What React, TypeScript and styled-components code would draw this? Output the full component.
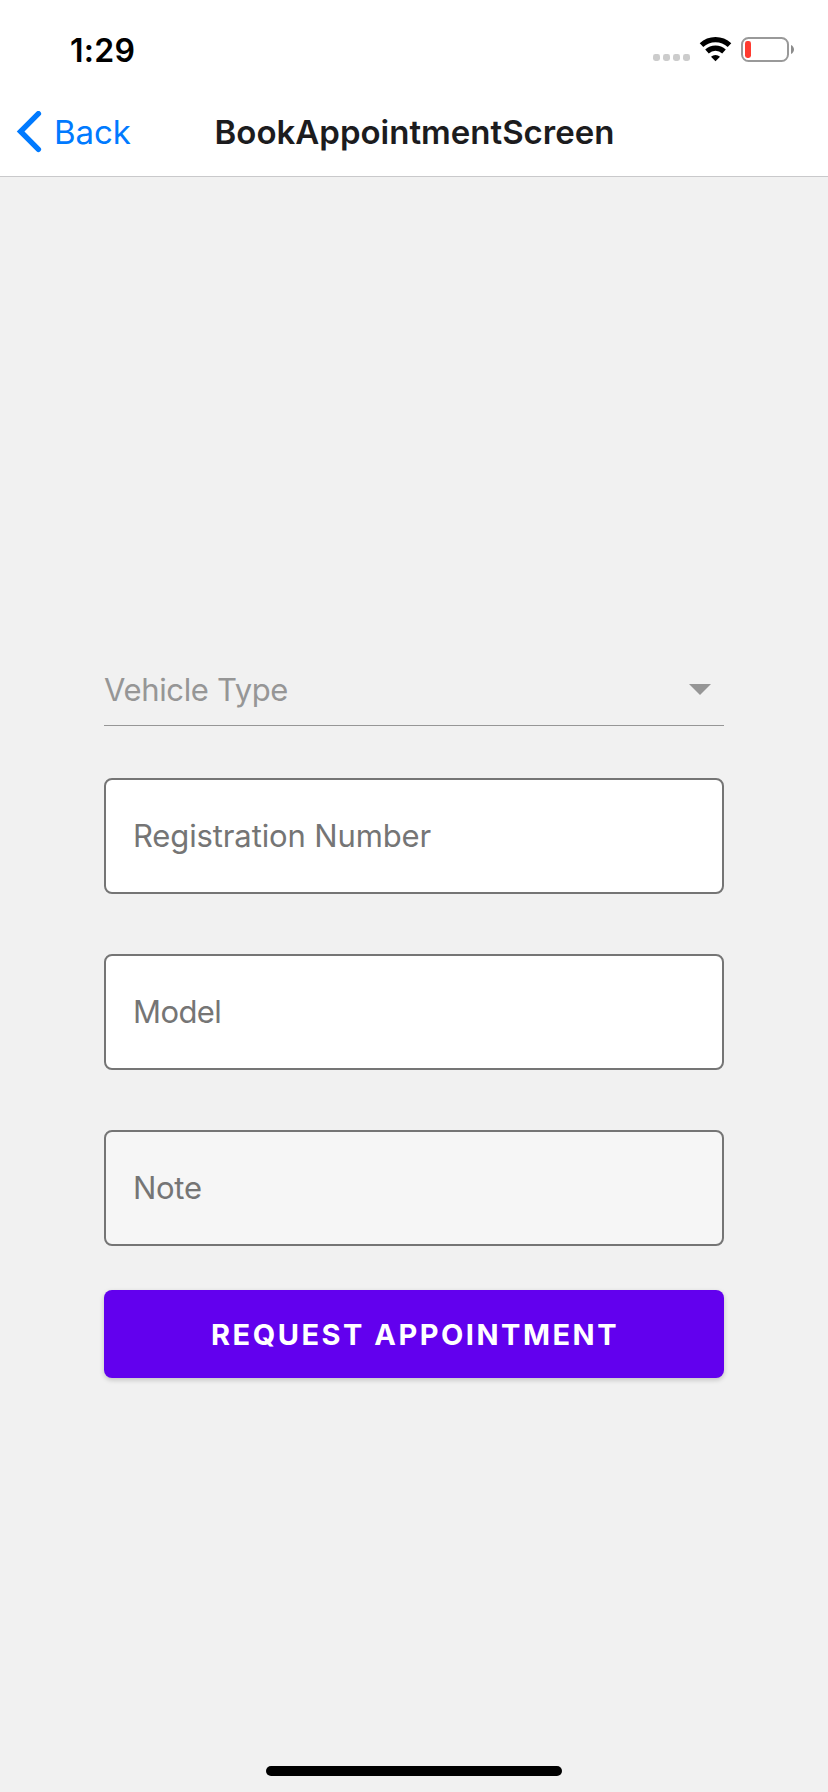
import React from "react";
import styled, { createGlobalStyle } from "styled-components";

const GlobalStyle = createGlobalStyle`
  *, *::before, *::after { box-sizing: border-box; }
  html, body { margin: 0; background: #f1f1f1; }
  body, input, button { font-family: Inter, "Liberation Sans", sans-serif; }
`;

const Screen = styled.div`
  display: flex;
  flex-direction: column;
  width: 828px;
  height: 1792px;
  background: #f1f1f1;
`;

const Header = styled.header`
  background: #ffffff;
  border-bottom: 1px solid #c9c9cb;
`;

const StatusBar = styled.div`
  display: flex;
  align-items: center;
  justify-content: space-between;
  height: 88px;
  padding: 10px 34px 0 70px;
`;

const Clock = styled.span`
  padding-top: 3px;
  font-size: 32px;
  font-weight: 600;
  line-height: 40px;
  letter-spacing: 0.3px;
  color: #000000;
`;

const StatusIcons = styled.svg`
  display: block;
  width: 142px;
  height: 28px;
`;

const NavBar = styled.nav`
  display: grid;
  grid-template-columns: 214px 401px 1fr;
  align-items: center;
  height: 88px;
`;

const BackButton = styled.button`
  display: flex;
  align-items: center;
  gap: 12px;
  padding: 0 0 0 16px;
  border: 0;
  background: none;
  font-size: 33px;
  line-height: 42px;
  letter-spacing: -0.1px;
  color: #007aff;
`;

const BackIcon = styled.svg`
  width: 26px;
  height: 42px;
`;

const Title = styled.h1`
  margin: 0;
  font-size: 33px;
  font-weight: 600;
  line-height: 42px;
  white-space: nowrap;
  text-align: center;
  color: #1c1c1e;
`;

const Form = styled.form`
  display: flex;
  flex: 1;
  flex-direction: column;
  padding: 477px 104px 0;
`;

const Select = styled.button`
  display: flex;
  align-items: center;
  justify-content: space-between;
  height: 72px;
  margin-bottom: 52px;
  padding: 0 13px 0 0;
  border: 0;
  border-bottom: 1px solid #969696;
  background: none;
  font-size: 31px;
  line-height: 40px;
  letter-spacing: -0.35px;
  color: #969696;
`;

const Caret = styled.svg`
  width: 22px;
  height: 11px;
`;

const Field = styled.input<{ $fill?: string; $gap?: number; $tracking: number }>`
  width: 100%;
  height: 116px;
  margin: 0 0 ${(p) => p.$gap ?? 60}px;
  padding: 0 27px 1px;
  border: 2px solid #757575;
  border-radius: 8px;
  outline: 0;
  background: ${(p) => p.$fill ?? "#ffffff"};
  font-size: 31px;
  letter-spacing: ${(p) => p.$tracking}px;

  &::placeholder {
    color: #757575;
    opacity: 1;
  }
`;

const SubmitButton = styled.button`
  height: 88px;
  padding: 0 0 0 2px;
  border: 0;
  border-radius: 8px;
  background: #6200ee;
  box-shadow: 0 2px 5px rgba(0, 0, 0, 0.2);
  font-size: 29px;
  font-weight: 700;
  letter-spacing: 2.5px;
  color: #ffffff;
`;

const HomeIndicator = styled.div`
  align-self: center;
  width: 296px;
  height: 10px;
  margin-bottom: 16px;
  border-radius: 5px;
  background: #000000;
`;

export default function App() {
  return (
    <Screen>
      <GlobalStyle />
      <Header>
        <StatusBar>
          <Clock>1:29</Clock>
          <StatusIcons viewBox="652 35 142 28" aria-hidden="true">
            <g fill="#cccccc">
              <rect x="653" y="54" width="7" height="7" rx="2.4" />
              <rect x="663" y="54" width="7" height="7" rx="2.4" />
              <rect x="673" y="54" width="7" height="7" rx="2.4" />
              <rect x="683" y="54" width="7" height="7" rx="2.4" />
            </g>
            <g fill="none" stroke="#000000" strokeWidth="5.2">
              <path d="M701.5 45.2a20.4 20.4 0 0 1 28 0" />
              <path d="M707 51.5a12.4 12.4 0 0 1 17 0" />
            </g>
            <path d="M711 56.7a6.6 6.6 0 0 1 9 0L715.5 61.3z" fill="#000000" />
            <rect x="742" y="38" width="46" height="23" rx="6.5" fill="none" stroke="#999999" strokeWidth="2" />
            <rect x="745" y="41" width="6" height="17" rx="2.4" fill="#ff3b30" />
            <path d="M791 45c4 1.8 4 7.2 0 9z" fill="#8c8c8c" />
          </StatusIcons>
        </StatusBar>
        <NavBar>
          <BackButton type="button">
            <BackIcon viewBox="16 111 26 42" aria-hidden="true">
              <path d="M38.4 113.7 20.6 131.5 38.4 149.3" fill="none" stroke="#007aff" strokeWidth="5.4" strokeLinecap="round" />
            </BackIcon>
            Back
          </BackButton>
          <Title>BookAppointmentScreen</Title>
        </NavBar>
      </Header>
      <Form>
        <Select type="button">
          Vehicle Type
          <Caret viewBox="0 0 22 11" aria-hidden="true">
            <path d="M0 0h22L11 11z" fill="#969696" />
          </Caret>
        </Select>
        <Field placeholder="Registration Number" $tracking={-0.13} />
        <Field placeholder="Model" $tracking={-0.6} />
        <Field placeholder="Note" $tracking={-0.3} $fill="#f6f6f6" $gap={44} />
        <SubmitButton type="button">REQUEST APPOINTMENT</SubmitButton>
      </Form>
      <HomeIndicator />
    </Screen>
  );
}
